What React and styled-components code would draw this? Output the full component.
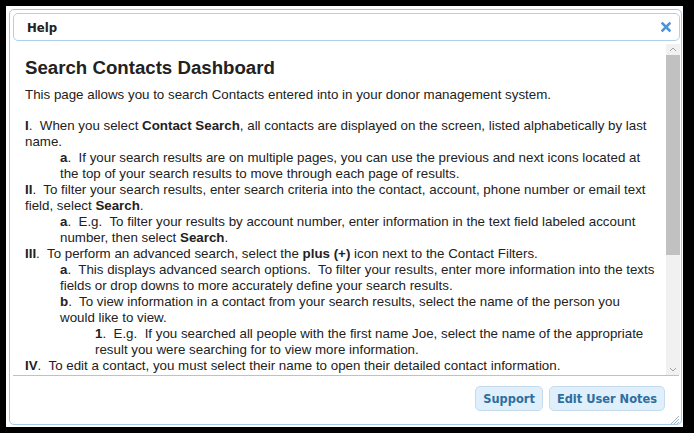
import React from "react";
import styled, { createGlobalStyle } from "styled-components";

const GlobalStyle = createGlobalStyle`
  html, body {
    margin: 0;
    padding: 0;
    background: #000;
  }
  body {
    font-family: "Liberation Sans", Arial, sans-serif;
  }
`;

const Frame = styled.div`
  margin: 6px 11px 0 6px;
  height: calc(100vh - 12px);
  background: #fff;
  padding: 3px 1px 2px 3px;
  box-sizing: border-box;
  display: flex;
`;

const Dialog = styled.div`
  position: relative;
  flex: 1;
  display: flex;
  flex-direction: column;
  border: 1px solid #a6c9e2;
  border-radius: 5px;
  padding: 3px 1px 0 3px;
  background: #fff;
  overflow: hidden;
`;

const TitleBar = styled.div`
  height: 26px;
  flex: none;
  display: flex;
  align-items: center;
  justify-content: space-between;
  border: 1px solid #aed0ea;
  border-radius: 5px;
  padding: 0 6px 0 13px;

  h2 {
    margin: 0;
    font-family: "DejaVu Sans Condensed", "DejaVu Sans", sans-serif;
    font-size: 13px;
    font-weight: bold;
    color: #222;
  }
`;

const CloseButton = styled.button`
  border: none;
  background: none;
  padding: 0;
  width: 14px;
  height: 14px;
  display: flex;
  align-items: center;
  justify-content: center;
  cursor: pointer;
`;

const Body = styled.div`
  flex: 1;
  min-height: 0;
  margin-top: 3px;
  display: flex;
`;

const Content = styled.div`
  flex: 1;
  overflow: hidden;
  padding: 12px 2px 0 12px;
  color: #222;
  font-size: 13.33px;
  line-height: 16px;
  white-space: nowrap;

  h1 {
    margin: 0 0 7px;
    font-size: 18.67px;
    line-height: 24px;
    font-weight: bold;
  }

  p {
    margin: 0 0 15px;
  }
`;

const Item = styled.div`
  padding-left: ${(props) => props.level * 35}px;
`;

const ScrollBar = styled.div`
  width: 14px;
  flex: none;
  display: flex;
  flex-direction: column;
  background: #f1f1f1;
`;

const ScrollArrow = styled.div`
  height: 11px;
  flex: none;
  display: flex;
  align-items: center;
  justify-content: center;
`;

const ScrollTrack = styled.div`
  flex: 1;
`;

const ScrollThumb = styled.div`
  height: 200px;
  background: #c1c1c1;
`;

const ButtonPane = styled.div`
  flex: none;
  height: 38px;
  border-top: 1px solid #a6c9e2;
  display: flex;
  justify-content: flex-end;
  align-items: flex-start;
  gap: 6px;
  padding: 10px 14px 0 0;
  margin-right: 1px;
`;

const Button = styled.button`
  height: 25px;
  padding: 0 7px;
  background: #dfeffc;
  border: 1px solid #c5dbec;
  border-radius: 5px;
  color: #2e6e9e;
  font-family: "DejaVu Sans Condensed", "DejaVu Sans", sans-serif;
  font-size: 12.7px;
  font-weight: bold;
  cursor: pointer;
`;

const Resize = styled.div`
  position: absolute;
  right: 1px;
  bottom: 1px;
  width: 12px;
  height: 12px;
`;

const CloseIcon = () => (
  <svg width="10" height="10" viewBox="0 0 10 10">
    <path d="M1.5 1.5 L8.5 8.5 M8.5 1.5 L1.5 8.5" stroke="#4f94d6" strokeWidth="2.6" strokeLinecap="square" />
  </svg>
);

const Caret = ({ down }) => (
  <svg width="8" height="5" viewBox="0 0 8 5">
    <path d={down ? "M1 1 L4 4 L7 1" : "M1 4 L4 1 L7 4"} stroke="#a3a3a3" strokeWidth="1" fill="none" />
  </svg>
);

const ResizeIcon = () => (
  <svg width="12" height="12" viewBox="0 0 12 12">
    <path d="M11 3 L3 11 M11 6 L6 11 M11 9 L9 11" stroke="#9bb3c7" strokeWidth="1" />
  </svg>
);

const App = () => {
  return (
    <>
      <GlobalStyle />
      <Frame>
        <Dialog>
          <TitleBar>
            <h2>Help</h2>
            <CloseButton aria-label="close">
              <CloseIcon />
            </CloseButton>
          </TitleBar>
          <Body>
            <Content>
              <h1>Search Contacts Dashboard</h1>
              <p>This page allows you to search Contacts entered into in your donor management system.</p>
              <Item level={0}>
                <b>I</b>.&nbsp; When you select <b>Contact Search</b>, all contacts are displayed on the screen, listed alphabetically by last
                <br />
                name.
              </Item>
              <Item level={1}>
                <b>a</b>.&nbsp; If your search results are on multiple pages, you can use the previous and next icons located at
                <br />
                the top of your search results to move through each page of results.
              </Item>
              <Item level={0}>
                <b>II</b>.&nbsp; To filter your search results, enter search criteria into the contact, account, phone number or email text
                <br />
                field, select <b>Search</b>.
              </Item>
              <Item level={1}>
                <b>a</b>.&nbsp; E.g.&nbsp; To filter your results by account number, enter information in the text field labeled account
                <br />
                number, then select <b>Search</b>.
              </Item>
              <Item level={0}>
                <b>III</b>.&nbsp; To perform an advanced search, select the <b>plus (+)</b> icon next to the Contact Filters.
              </Item>
              <Item level={1}>
                <b>a</b>.&nbsp; This displays advanced search options.&nbsp; To filter your results, enter more information into the texts
                <br />
                fields or drop downs to more accurately define your search results.
              </Item>
              <Item level={1}>
                <b>b</b>.&nbsp; To view information in a contact from your search results, select the name of the person you
                <br />
                would like to view.
              </Item>
              <Item level={2}>
                <b>1</b>.&nbsp; E.g.&nbsp; If you searched all people with the first name Joe, select the name of the appropriate
                <br />
                result you were searching for to view more information.
              </Item>
              <Item level={0}>
                <b>IV</b>.&nbsp; To edit a contact, you must select their name to open their detailed contact information.
              </Item>
              <Item level={1}>
                <b>a</b>.&nbsp; You must have access to edit a contact to view and select the <b>Edit</b> button to edit this contact's
                <br />
                information.
              </Item>
            </Content>
            <ScrollBar>
              <ScrollArrow>
                <Caret />
              </ScrollArrow>
              <ScrollTrack>
                <ScrollThumb />
              </ScrollTrack>
              <ScrollArrow>
                <Caret down />
              </ScrollArrow>
            </ScrollBar>
          </Body>
          <ButtonPane>
            <Button>Support</Button>
            <Button>Edit User Notes</Button>
          </ButtonPane>
          <Resize>
            <ResizeIcon />
          </Resize>
        </Dialog>
      </Frame>
    </>
  );
};

export default App;
